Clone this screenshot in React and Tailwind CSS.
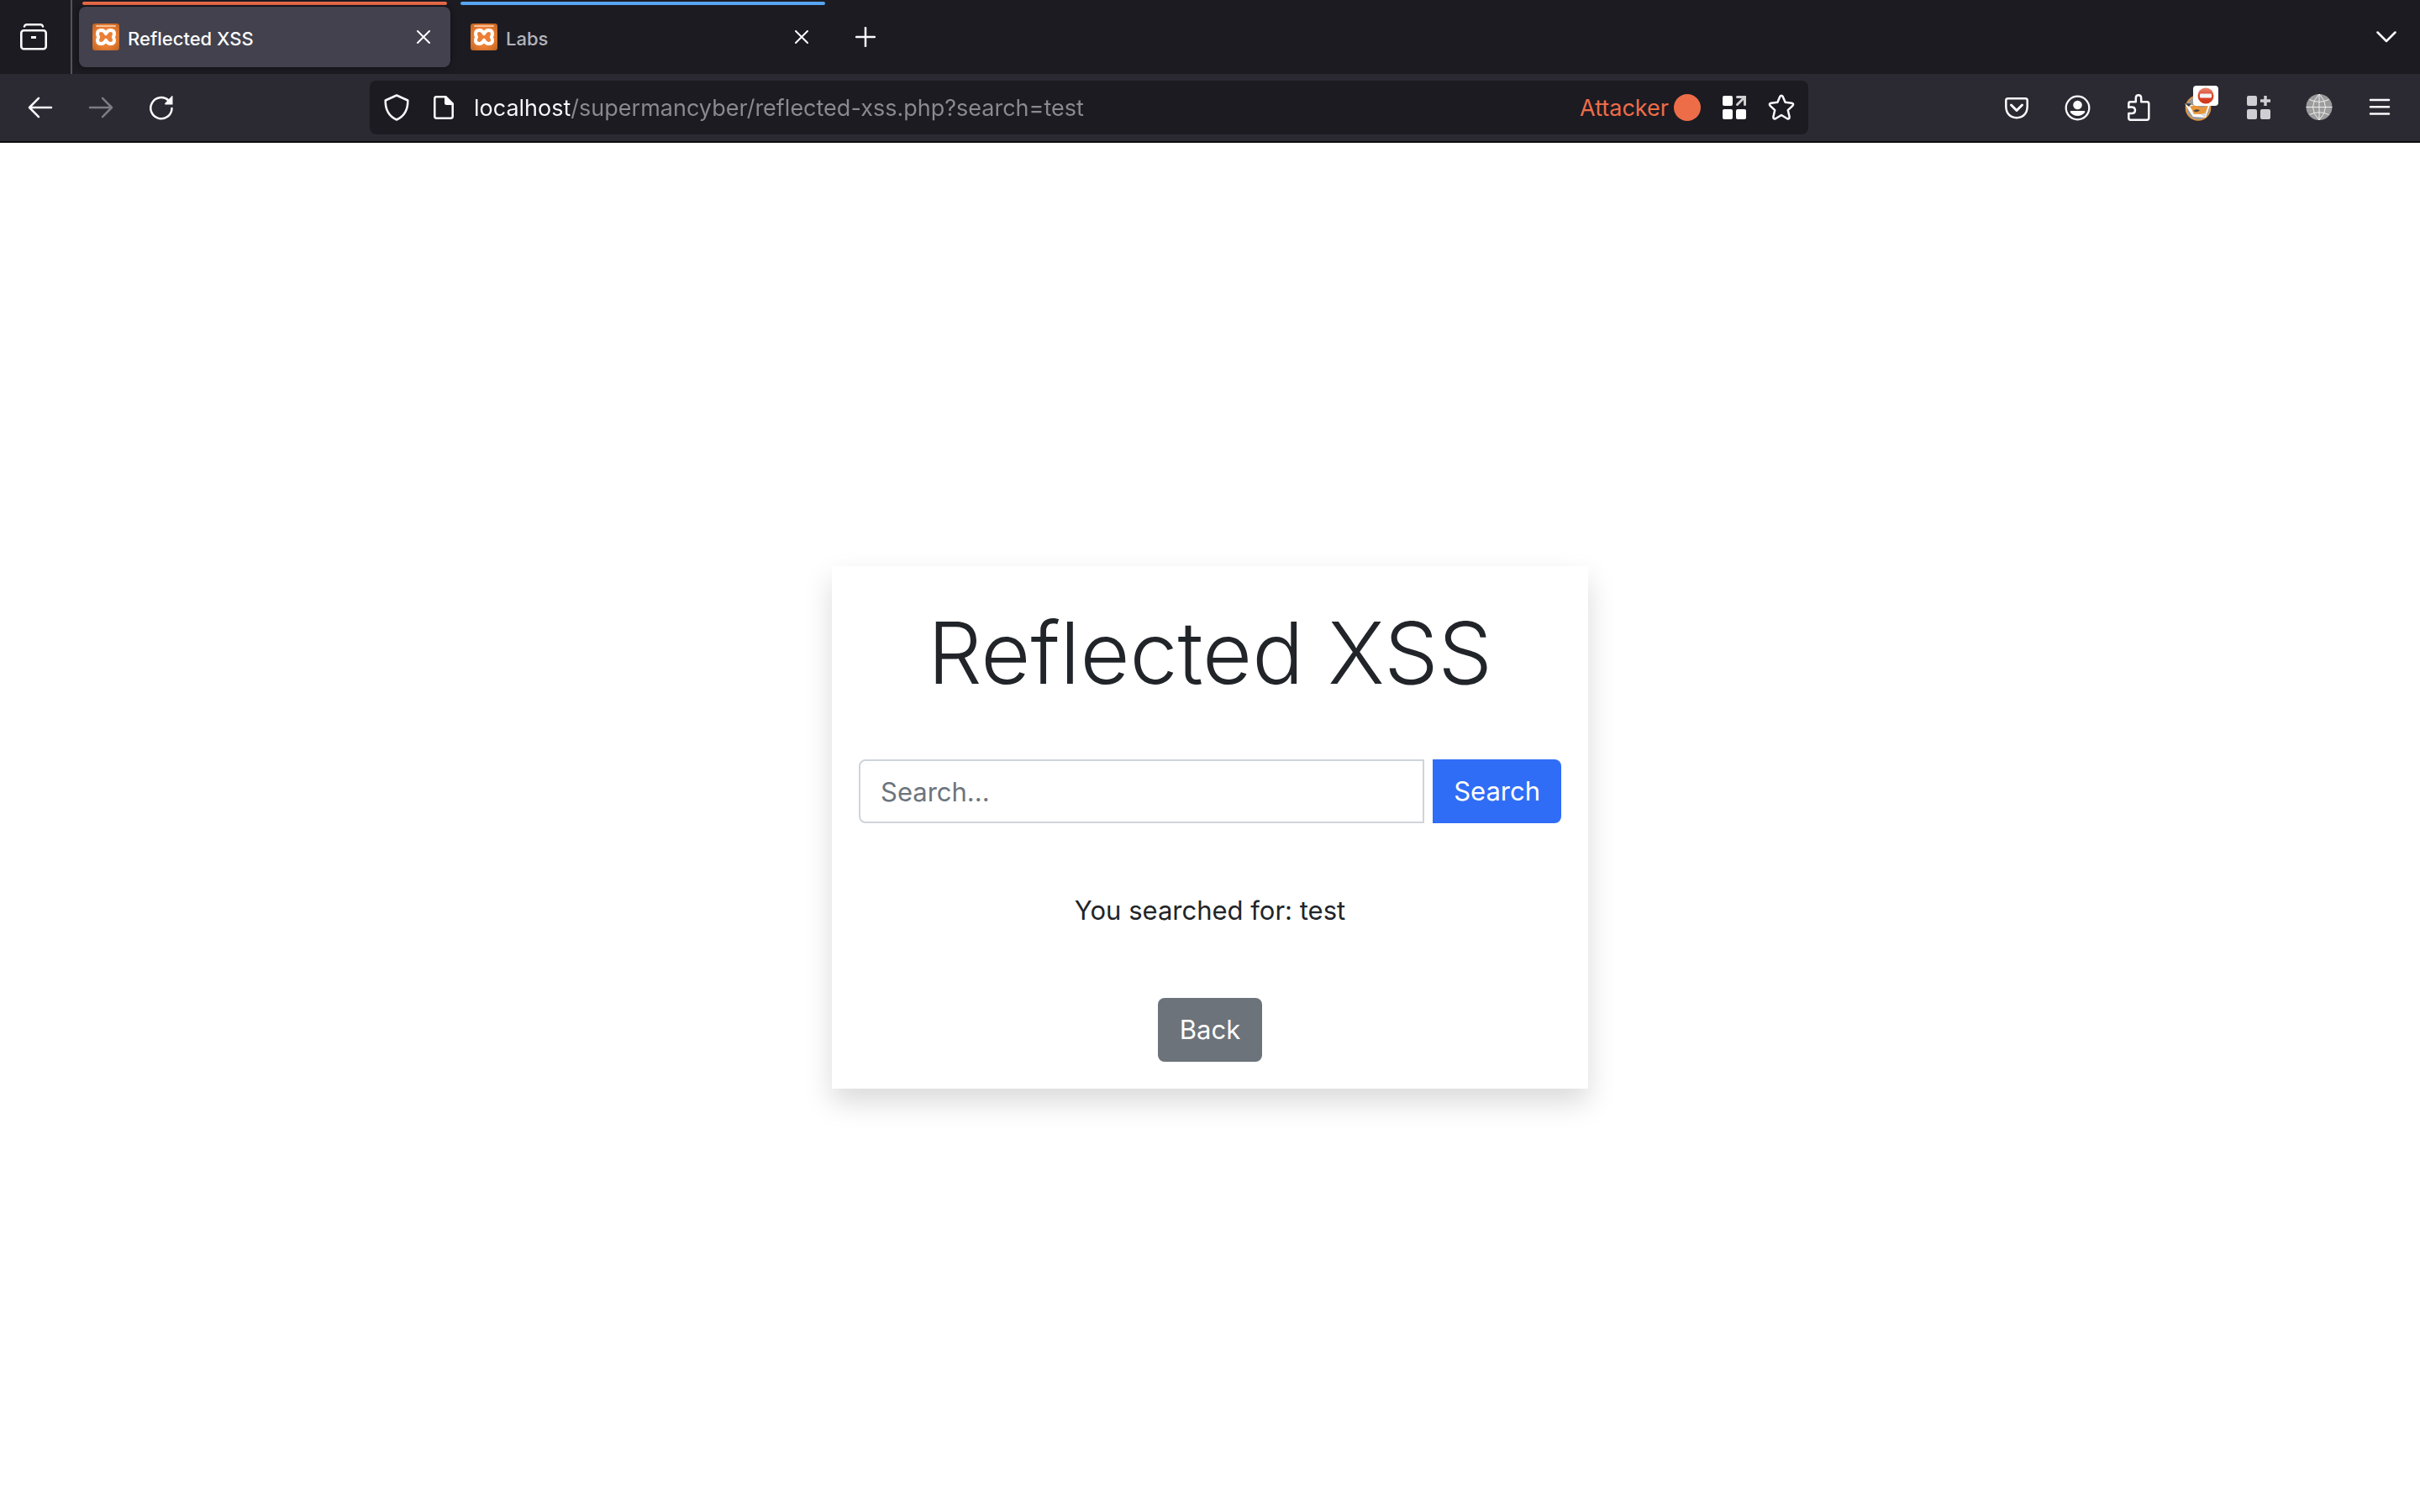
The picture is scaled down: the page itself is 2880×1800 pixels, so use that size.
const line = {
  fill: "none",
  stroke: "currentColor",
  strokeWidth: 2.5,
  strokeLinecap: "round",
  strokeLinejoin: "round",
};

function Icon({ children, className = "size-8" }) {
  return (
    <svg viewBox="0 0 32 32" className={className} aria-hidden="true">
      {children}
    </svg>
  );
}

function IconButton({ label, className = "", children }) {
  return (
    <button type="button" aria-label={label} className={`flex shrink-0 items-center justify-center ${className}`}>
      {children}
    </button>
  );
}

function Favicon() {
  return (
    <Icon className="size-8 shrink-0">
      <defs>
        <radialGradient id="fav" cx="50%" cy="50%" r="72%">
          <stop offset="0.5" stopColor="#ec7f35" />
          <stop offset="1" stopColor="#b9601f" />
        </radialGradient>
      </defs>
      <rect width="32" height="32" rx="3" fill="url(#fav)" />
      <rect x="4" y="2" width="24" height="2" rx="1" fill="#f5c09a" />
      <path
        d="M16 12.200Q18 8 21.500 8Q26 8 26 12Q26 14 24.800 16Q26 18 26 20Q26 24 21.500 24Q18 24 16 19.800Q14 24 10.500 24Q6 24 6 20Q6 18 7.200 16Q6 14 6 12Q6 8 10.500 8Q14 8 16 12.200Z"
        fill="none"
        stroke="#fff"
        strokeWidth="4"
        strokeLinejoin="round"
      />
    </Icon>
  );
}

function Tab({ title, active }) {
  return (
    <div className={`flex w-[442px] flex-col ${active ? "text-[#fbfbfe]" : "text-[#b4b4b9]"}`}>
      <div className={`mx-1 mt-0.5 mb-0.5 h-1 rounded-sm ${active ? "bg-[#ee6d49]" : "bg-[#57a5f4]"}`} />
      <div className={`flex h-[72px] items-center rounded-lg pr-6 pl-4 ${active ? "bg-[#42414d] shadow-[0_0_6px_rgba(0,0,0,0.5)]" : ""}`}>
        <button type="button" role="tab" aria-selected={active} className="flex min-w-0 flex-1 items-center gap-2.5 text-left">
          <Favicon />
          <span className="truncate pt-1 text-[22px] leading-8 font-medium">{title}</span>
        </button>
        <IconButton label={`Close ${title}`} className="size-4 text-[#fbfbfe]">
          <svg viewBox="0 0 16 16" className="size-4" aria-hidden="true">
            <path d="M1 1l14 14M15 1L1 15" {...line} strokeWidth="2" />
          </svg>
        </IconButton>
      </div>
    </div>
  );
}

function TabStrip() {
  return (
    <div className="flex h-[88px] bg-[#1c1b22]">
      <IconButton label="Recent browsing" className="w-[86px] border-r-2 border-[#55545c] pr-1">
        <Icon>
          <path d="M5 3.500Q5.500 1.200 8 1.200H24Q26.500 1.200 27 3.500" {...line} />
          <rect x="1.300" y="8.300" width="29.400" height="22" rx="3" {...line} strokeWidth="2.600" />
          <path d="M13 16.500h6" {...line} strokeWidth="3" strokeLinecap="butt" />
        </Icon>
      </IconButton>
      <div role="tablist" aria-label="Open tabs" className="ml-2 flex gap-2">
        <Tab title="Reflected XSS" active />
        <Tab title="Labs" active={false} />
      </div>
      <IconButton label="New tab" className="ml-5 w-12">
        <svg viewBox="0 0 24 24" className="size-6" aria-hidden="true">
          <path d="M12 1v22M1 12h22" {...line} />
        </svg>
      </IconButton>
      <div className="flex-1" />
      <IconButton label="List all tabs" className="mr-4 w-12">
        <svg viewBox="0 0 24 14" className="h-3.5 w-6" aria-hidden="true">
          <path d="M1.500 1.500L12 12L22.500 1.500" {...line} />
        </svg>
      </IconButton>
    </div>
  );
}

function AddressBar() {
  return (
    <div className="flex h-16 min-w-0 flex-[1680_1_0%] items-center rounded-lg bg-[#1c1b22] px-4">
      <IconButton label="Tracking protection">
        <Icon>
          <path d="M16 1.500L29.300 7.500C29.500 18 25 26.500 16 30.500C7 26.500 2.500 18 2.700 7.500Z" {...line} />
        </Icon>
      </IconButton>
      <IconButton label="Site information" className="ml-6">
        <Icon>
          <path d="M18 3.300H7.500Q5.300 3.300 5.300 5.500V26.500Q5.300 28.700 7.500 28.700H24.500Q26.700 28.700 26.700 26.500V12" {...line} />
          <path d="M17 2H19L28 11V13H19.500Q17 13 17 10.500Z" fill="currentColor" />
        </Icon>
      </IconButton>
      <input
        type="text"
        aria-label="Address"
        defaultValue="localhost/supermancyber/reflected-xss.php?search=test"
        className="ml-5 min-w-0 flex-1 bg-linear-to-r from-[#fbfbfe] from-[115px] to-[#8b8a90] to-[115px] bg-clip-text pt-0.5 text-[27px] leading-10 text-transparent outline-none"
      />
      <span className="pt-0.5 text-[27px] leading-10 text-[#ee6d49]">Attacker</span>
      <span className="ml-1.5 size-8 shrink-0 rounded-full bg-[#ee6d49]" />
      <IconButton label="Open in container" className="ml-6">
        <Icon>
          <rect x="2" y="2" width="12" height="12" rx="2" fill="#fff" />
          <rect x="2" y="18" width="12" height="12" rx="2" fill="#fff" />
          <rect x="18" y="18" width="12" height="12" rx="2" fill="#fff" />
          <path d="M19.500 3.500H28.500V12.500M28 4L19.500 12.500" fill="none" stroke="#cfcfd0" strokeWidth="3" strokeLinecap="round" />
        </Icon>
      </IconButton>
      <IconButton label="Bookmark this page" className="ml-6">
        <Icon>
          <path
            d="M14.400 2.800Q16 .5 17.600 2.800L20.600 9.800L28.400 10.800Q31.200 11.500 29.400 13.800L23.800 19.200L25.600 27Q25.800 30.200 23 29.300L16 25L9 29.300Q6.200 30.200 6.400 27L8.200 19.200L2.600 13.800Q.8 11.500 3.600 10.800L11.400 9.800Z"
            {...line}
          />
        </Icon>
      </IconButton>
    </div>
  );
}

function FoxIcon() {
  return (
    <span className="relative block size-8">
      <Icon>
        <circle cx="16" cy="16.500" r="14.500" fill="#9a9a9a" stroke="#e8963c" strokeWidth="1.600" />
        <path d="M0 11L13 14L20 17L30 13L25 28L10 27Q6 22 0 11Z" fill="#fff" />
        <path d="M6 14.500L14 13L20 16L28 13.500L24 25Q17 23 11 24Q9 19 6 14.500Z" fill="#e8963c" />
        <path d="M0 11L8 11.500L5 15Z" fill="#3a3a3a" />
        <path d="M10 20Q14 17 18 19.500Q14 22.500 10 20Z" fill="#4a4440" />
        <path d="M19 24L26 22L24 28Z" fill="#d8d8d8" />
      </Icon>
      <span className="absolute -top-2.5 left-2.5 flex h-6 w-[30px] items-center justify-center rounded bg-white">
        <svg viewBox="0 0 20 20" className="size-5" aria-hidden="true">
          <defs>
            <linearGradient id="stop" x2="0" y2="1">
              <stop offset="0" stopColor="#ea8a76" />
              <stop offset="0.450" stopColor="#dd4a30" />
              <stop offset="1" stopColor="#cf3317" />
            </linearGradient>
          </defs>
          <circle cx="10" cy="10" r="9.500" fill="url(#stop)" />
          <rect x="3" y="7.500" width="14" height="5" rx="1" fill="#f4f4f4" />
        </svg>
      </span>
    </span>
  );
}

function Toolbar() {
  return (
    <div className="flex h-[82px] items-center border-b-2 border-[#0c0c0d] bg-[#2b2a33] px-8">
      <div className="flex gap-10">
        <IconButton label="Back">
          <Icon>
            <path d="M29 16H3.500M14 4.800L3 16L14 27.200" {...line} />
          </Icon>
        </IconButton>
        <IconButton label="Forward" className="text-[#7d7c82]">
          <Icon>
            <path d="M3 16H28.500M18 4.800L29 16L18 27.200" {...line} />
          </Icon>
        </IconButton>
        <IconButton label="Reload">
          <Icon>
            <path d="M28.500 17A12.600 12.600 0 1 1 24.500 7.500" {...line} />
            <path d="M29.500 2V12.500H20.500Q19.500 11.500 20.500 10.700L28.500 2.300Z" fill="currentColor" />
          </Icon>
        </IconButton>
      </div>
      <div className="flex-[232_1_0%]" />
      <AddressBar />
      <div className="flex-[232_1_0%]" />
      <div className="flex gap-10">
        <IconButton label="Save to Pocket">
          <Icon>
            <path d="M5.500 5.200H26.500Q28.700 5.200 28.700 7.500V15Q28.200 27.300 16 28.200Q3.800 27.300 3.300 15V7.500Q3.300 5.200 5.500 5.200Z" {...line} />
            <path d="M9.500 13L16 19.500L22.500 13" {...line} strokeWidth="3" />
          </Icon>
        </IconButton>
        <IconButton label="Account">
          <Icon>
            <circle cx="16.500" cy="16.500" r="13.800" {...line} strokeWidth="2.300" />
            <circle cx="16.500" cy="13" r="5.300" fill="currentColor" />
            <path d="M8.500 20H24.500Q26 20.500 25 22Q21.500 26 16.500 26T8 22Q7 20.500 8.500 20Z" fill="currentColor" />
          </Icon>
        </IconButton>
        <IconButton label="Extensions">
          <Icon>
            <path
              d="M5.300 16V11.500Q5.300 9.300 7.500 9.300H13.800V5Q13.800 1.300 17 1.300T20.200 5V9.300H27Q29.300 9.300 29.300 11.500V28.500Q29.300 30.700 27 30.700H7.500Q5.300 30.700 5.300 28.500V23H9Q13 23 13 19.300T9 15.500H5.300"
              {...line}
            />
          </Icon>
        </IconButton>
        <IconButton label="Proxy">
          <FoxIcon />
        </IconButton>
        <IconButton label="Containers">
          <Icon>
            <g fill="#cfcfd3">
              <rect x="2" y="2" width="12" height="12" rx="2" />
              <rect x="2" y="18" width="12" height="12" rx="2" />
              <rect x="18" y="18" width="12" height="12" rx="2" />
              <path d="M22.300 2h3.400v4.300H30v3.400h-4.300V14h-3.400V9.700H18V6.300h4.300z" />
            </g>
          </Icon>
        </IconButton>
        <IconButton label="Network">
          <Icon>
            <circle cx="16" cy="15.500" r="15.500" fill="#9c9c9c" />
            <path
              d="M16 0V31M.5 15.500H31.500M16 0Q1 15.500 16 31M16 0Q31 15.500 16 31M4.500 6.500Q16 12 27.500 6.500M4.500 24.500Q16 19 27.500 24.500"
              fill="none"
              stroke="#efefef"
              strokeWidth="1"
            />
          </Icon>
        </IconButton>
        <IconButton label="Application menu">
          <Icon>
            <path d="M5 7h22M5 15.300h22M5 23.500h22" {...line} />
          </Icon>
        </IconButton>
      </div>
    </div>
  );
}

function SearchCard() {
  return (
    <section className="w-[900px] max-w-full bg-white p-8 text-center shadow-[0_16px_32px_rgba(0,0,0,0.15)]">
      <h1 className="mb-15 pt-1 text-[102px] leading-[134px] font-light">Reflected XSS</h1>
      <form className="flex gap-2.5" onSubmit={(event) => event.preventDefault()}>
        <input
          type="text"
          aria-label="Search"
          placeholder="Search..."
          className="h-[76px] min-w-0 flex-1 rounded-l-lg border-2 border-[#ced4da] px-6 placeholder:text-[#6c757d]"
        />
        <button type="submit" className="h-[76px] rounded-r-lg bg-[#306df6] px-[25px] text-white">
          Search
        </button>
      </form>
      <p className="my-20 leading-[48px]">You searched for: test</p>
      <a href="#back" className="mx-auto flex h-[76px] w-fit items-center rounded-lg bg-[#6c737a] px-[26px] text-white">
        Back
      </a>
    </section>
  );
}

export default function App() {
  return (
    <div className="flex min-h-screen flex-col bg-white font-['Inter',sans-serif]">
      <header className="text-[#fbfbfe]">
        <TabStrip />
        <Toolbar />
      </header>
      <main className="flex flex-1 items-center justify-center text-[31px] text-[#212529]">
        <SearchCard />
      </main>
    </div>
  );
}
